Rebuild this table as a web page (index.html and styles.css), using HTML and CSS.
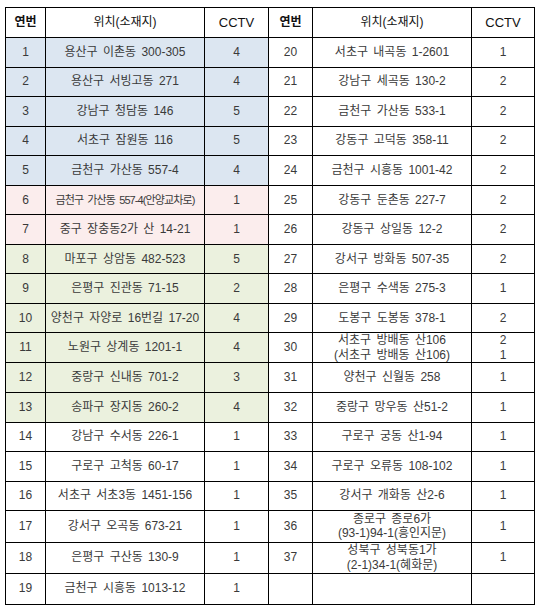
FILE: index.html
```html
<!DOCTYPE html>
<html lang="ko">
<head>
<meta charset="utf-8">
<link rel="stylesheet" href="styles.css">
</head>
<body>
<table class="cctv">
  <colgroup>
    <col class="c-no"><col class="c-loc"><col class="c-cnt">
    <col class="c-no2"><col class="c-loc"><col class="c-cnt2">
  </colgroup>
  <thead>
    <tr class="head">
      <th class="h-bold">연번</th><th>위치(소재지)</th><th class="h-latin">CCTV</th>
      <th class="h-bold">연번</th><th>위치(소재지)</th><th class="h-latin">CCTV</th>
    </tr>
  </thead>
  <tbody>
    <tr><td class="blue">1</td><td class="blue">용산구 이촌동 300-305</td><td class="blue">4</td><td>20</td><td>서초구 내곡동 1-2601</td><td>1</td></tr>
    <tr><td class="blue">2</td><td class="blue">용산구 서빙고동 271</td><td class="blue">4</td><td>21</td><td>강남구 세곡동 130-2</td><td>2</td></tr>
    <tr><td class="blue">3</td><td class="blue">강남구 청담동 146</td><td class="blue">5</td><td>22</td><td>금천구 가산동 533-1</td><td>2</td></tr>
    <tr><td class="blue">4</td><td class="blue">서초구 잠원동 116</td><td class="blue">5</td><td>23</td><td>강동구 고덕동 358-11</td><td>2</td></tr>
    <tr><td class="blue">5</td><td class="blue">금천구 가산동 557-4</td><td class="blue">4</td><td>24</td><td>금천구 시흥동 1001-42</td><td>2</td></tr>
    <tr><td class="pink">6</td><td class="pink narrow">금천구 가산동 557-4(안양교차로)</td><td class="pink">1</td><td>25</td><td>강동구 둔촌동 227-7</td><td>2</td></tr>
    <tr><td class="pink">7</td><td class="pink">중구 장충동2가 산 14-21</td><td class="pink">1</td><td>26</td><td>강동구 상일동 12-2</td><td>2</td></tr>
    <tr><td class="green">8</td><td class="green">마포구 상암동 482-523</td><td class="green">5</td><td>27</td><td>강서구 방화동 507-35</td><td>2</td></tr>
    <tr><td class="green">9</td><td class="green">은평구 진관동 71-15</td><td class="green">2</td><td>28</td><td>은평구 수색동 275-3</td><td>1</td></tr>
    <tr><td class="green">10</td><td class="green">양천구 자양로 16번길 17-20</td><td class="green">4</td><td>29</td><td>도봉구 도봉동 378-1</td><td>2</td></tr>
    <tr><td class="green">11</td><td class="green">노원구 상계동 1201-1</td><td class="green">4</td><td>30</td><td class="two">서초구 방배동 산106<br>(서초구 방배동 산106)</td><td class="two">2<br>1</td></tr>
    <tr><td class="green">12</td><td class="green">중랑구 신내동 701-2</td><td class="green">3</td><td>31</td><td>양천구 신월동 258</td><td>1</td></tr>
    <tr><td class="green">13</td><td class="green">송파구 장지동 260-2</td><td class="green">4</td><td>32</td><td>중랑구 망우동 산51-2</td><td>1</td></tr>
    <tr><td>14</td><td>강남구 수서동 226-1</td><td>1</td><td>33</td><td>구로구 궁동 산1-94</td><td>1</td></tr>
    <tr><td>15</td><td>구로구 고척동 60-17</td><td>1</td><td>34</td><td>구로구 오류동 108-102</td><td>1</td></tr>
    <tr><td>16</td><td>서초구 서초3동 1451-156</td><td>1</td><td>35</td><td>강서구 개화동 산2-6</td><td>1</td></tr>
    <tr class="tall"><td>17</td><td>강서구 오곡동 673-21</td><td>1</td><td>36</td><td class="two">종로구 종로6가<br>(93-1)94-1(흥인지문)</td><td>1</td></tr>
    <tr class="tall"><td>18</td><td>은평구 구산동 130-9</td><td>1</td><td>37</td><td class="two">성북구 성북동1가<br>(2-1)34-1(혜화문)</td><td>1</td></tr>
    <tr class="tall"><td>19</td><td>금천구 시흥동 1013-12</td><td>1</td><td></td><td></td><td></td></tr>
  </tbody>
</table>
</body>
</html>
```

FILE: styles.css
```css
html, body {
  margin: 0;
  padding: 0;
  background: #ffffff;
}

body {
  padding: 7px 0 0 5px;
  font-family: "Liberation Sans", "Noto Sans CJK KR", sans-serif;
  font-size: 12px;
  color: #3a3a3a;
}

.cctv {
  border-collapse: collapse;
  table-layout: fixed;
  width: 529px;
}

.c-no { width: 40px; }
.c-loc { width: 159px; }
.c-cnt { width: 64px; }
.c-no2 { width: 44px; }
.c-cnt2 { width: 63px; }

.cctv th,
.cctv td {
  border: 1px solid #000;
  padding: 0;
  text-align: center;
  vertical-align: middle;
  line-height: 15px;
  white-space: nowrap;
  word-spacing: 2px;
}

.cctv th {
  font-weight: 400;
  color: #111;
  font-size: 12px;
}

.cctv th.h-bold {
  font-weight: 700;
}

.cctv th.h-latin {
  font-size: 13px;
}

.head { height: 30px; }
.cctv tbody tr { height: 29.56px; }
.cctv tbody tr.tall { height: 31.3px; }

.blue { background: #dce6f1; }
.pink { background: #fbeded; }
.green { background: #ebf1de; }

.narrow {
  font-size: 11px;
  letter-spacing: -0.9px;
  word-spacing: 0;
}

.cctv td.two {
  font-size: 12px;
  line-height: 14.5px;
}
```
